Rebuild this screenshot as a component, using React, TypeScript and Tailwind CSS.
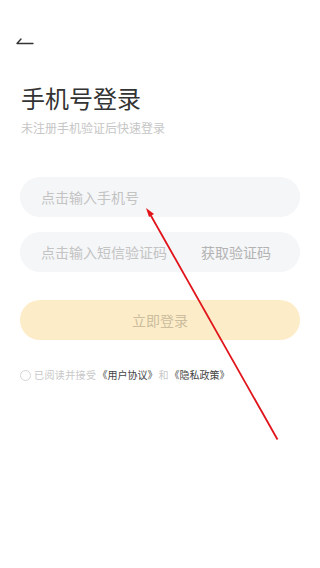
export default function App() {
  return (
    <div
      className="relative w-[320px] h-[568px] bg-white overflow-hidden"
      style={{ fontFamily: '"Noto Sans CJK SC", "Noto Sans", sans-serif' }}
    >
      <div className="h-[30px]" />
      <div className="h-[20px] px-[16px] flex items-center">
        <svg width="18" height="8" viewBox="0 0 18 8" className="mt-[2px]">
          <path d="M1 6.5 H17 M1 6.5 L5 2" stroke="#333" strokeWidth="1.4" fill="none" strokeLinecap="round" />
        </svg>
      </div>

      <div className="px-[21px] pt-[31px]">
        <h1 className="text-[24px] leading-[34px] text-[#333] font-normal">手机号登录</h1>
        <p className="mt-[5px] text-[12px] leading-[16px] text-[#c6c6c6]">未注册手机验证后快速登录</p>
      </div>

      <div className="px-[20px] mt-[41px] flex flex-col">
        <div className="h-[40px] rounded-full bg-[#f5f6f8] flex items-center px-[21px]">
          <span className="text-[14px] text-[#c3c3c3]">点击输入手机号</span>
        </div>
        <div className="mt-[15px] h-[40px] rounded-full bg-[#f5f6f8] flex items-center justify-between pl-[21px] pr-[29px]">
          <span className="text-[14px] text-[#c3c3c3]">点击输入短信验证码</span>
          <span className="text-[14px] text-[#b3b3b3]">获取验证码</span>
        </div>
        <div className="mt-[28px] h-[40px] rounded-full bg-[#fdecc8] flex items-center justify-center">
          <span className="text-[14px] text-[#cbbd9e]">立即登录</span>
        </div>
        <div className="mt-[28px] flex items-center gap-[1px] text-[10px] leading-[14px]">
          <span className="w-[11px] h-[11px] rounded-full border border-[#d6d6d6] mr-[2px]" />
          <span className="text-[#c8c8c8] tracking-[0.4px]">已阅读并接受</span>
          <span className="text-[#444]">《用户协议》</span>
          <span className="text-[#c8c8c8]">和</span>
          <span className="text-[#444]">《隐私政策》</span>
        </div>
      </div>

      <svg className="absolute left-0 top-0 pointer-events-none" width="320" height="568">
        <line x1="277.5" y1="439.5" x2="150" y2="214" stroke="#e0141a" strokeWidth="1.8" />
        <polygon points="146,208 154,214 149,217" fill="#e0141a" />
      </svg>
    </div>
  );
}
